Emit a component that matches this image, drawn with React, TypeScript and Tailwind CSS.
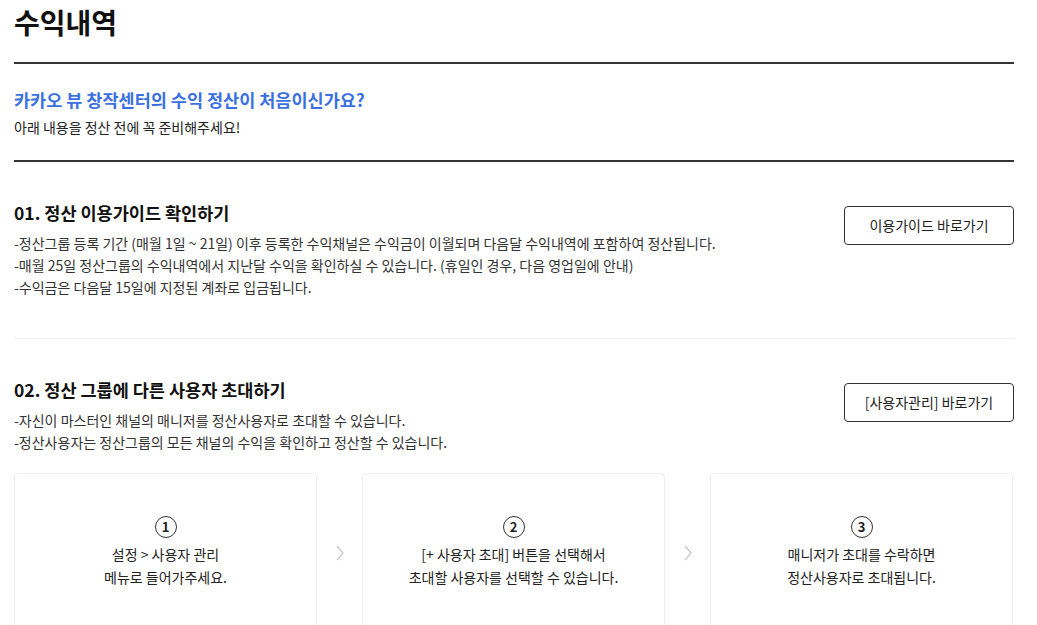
const font = { fontFamily: '"Noto Sans CJK KR", "Noto Sans", sans-serif' };

const steps = [
  { no: 1, lines: ['설정 > 사용자 관리', '메뉴로 들어가주세요.'] },
  { no: 2, lines: ['[+ 사용자 초대] 버튼을 선택해서', '초대할 사용자를 선택할 수 있습니다.'] },
  { no: 3, lines: ['매니저가 초대를 수락하면', '정산사용자로 초대됩니다.'] },
];

const Chevron = () => (
  <svg width="12" height="18" viewBox="0 0 12 18" fill="none" stroke="#c8c8c8" strokeWidth="1.3">
    <path d="M3 2l6 7-6 7" />
  </svg>
);

const GuideButton = ({ label }: { label: string }) => (
  <button className="mt-[6px] w-[170px] h-[39px] shrink-0 rounded-[4px] border border-[#333] bg-white text-[14px] text-[#222]">
    {label}
  </button>
);

export default function App() {
  return (
    <div className="min-h-screen bg-white px-[14px] text-[#222]" style={font}>
      <div className="w-[1000px]">
        <h1 className="text-[28px] font-bold leading-[44px] text-[#111]">수익내역</h1>

        <div className="mt-[18px] border-t-2 border-[#333] pt-[23px] pb-[22px]">
          <h2 className="text-[17.5px] font-bold leading-[26px] text-[#3a70e2]">
            카카오 뷰 창작센터의 수익 정산이 처음이신가요?
          </h2>
          <p className="mt-[3px] text-[14px] leading-[22px] text-[#222]">아래 내용을 정산 전에 꼭 준비해주세요!</p>
        </div>

        <section className="border-t-2 border-[#333] pt-[38px] pb-[40px]">
          <div className="flex items-start justify-between">
            <div>
              <h3 className="text-[17.5px] font-bold leading-[26px] text-[#111]">01. 정산 이용가이드 확인하기</h3>
              <ul className="mt-[6px] text-[14px] leading-[22px] text-[#333]">
                <li>-정산그룹 등록 기간 (매월 1일 ~ 21일) 이후 등록한 수익채널은 수익금이 이월되며 다음달 수익내역에 포함하여 정산됩니다.</li>
                <li>-매월 25일 정산그룹의 수익내역에서 지난달 수익을 확인하실 수 있습니다. (휴일인 경우, 다음 영업일에 안내)</li>
                <li>-수익금은 다음달 15일에 지정된 계좌로 입금됩니다.</li>
              </ul>
            </div>
            <GuideButton label="이용가이드 바로가기" />
          </div>
        </section>

        <section className="border-t border-[#eee] pt-[38px]">
          <div className="flex items-start justify-between">
            <div>
              <h3 className="text-[17.5px] font-bold leading-[26px] text-[#111]">02. 정산 그룹에 다른 사용자 초대하기</h3>
              <ul className="mt-[6px] text-[14px] leading-[22px] text-[#333]">
                <li>-자신이 마스터인 채널의 매니저를 정산사용자로 초대할 수 있습니다.</li>
                <li>-정산사용자는 정산그룹의 모든 채널의 수익을 확인하고 정산할 수 있습니다.</li>
              </ul>
            </div>
            <GuideButton label="[사용자관리] 바로가기" />
          </div>

          <div className="mt-[20px] flex items-center">
            {steps.map((s, i) => (
              <div key={s.no} className="contents">
                {i > 0 && (
                  <div className="flex w-[45px] shrink-0 justify-center">
                    <Chevron />
                  </div>
                )}
                <div className="flex h-[160px] w-[303px] shrink-0 flex-col items-center justify-center rounded-[4px] border border-[#eee] bg-white pb-[2px]">
                  <span className="flex h-[22px] w-[22px] items-center justify-center rounded-full border-[1.5px] border-[#333] text-[13px] font-bold leading-none text-[#222]">
                    {s.no}
                  </span>
                  <div className="mt-[5px] text-center text-[14px] leading-[23px] text-[#222]">
                    {s.lines.map((l) => (
                      <p key={l}>{l}</p>
                    ))}
                  </div>
                </div>
              </div>
            ))}
          </div>
        </section>
      </div>
    </div>
  );
}
